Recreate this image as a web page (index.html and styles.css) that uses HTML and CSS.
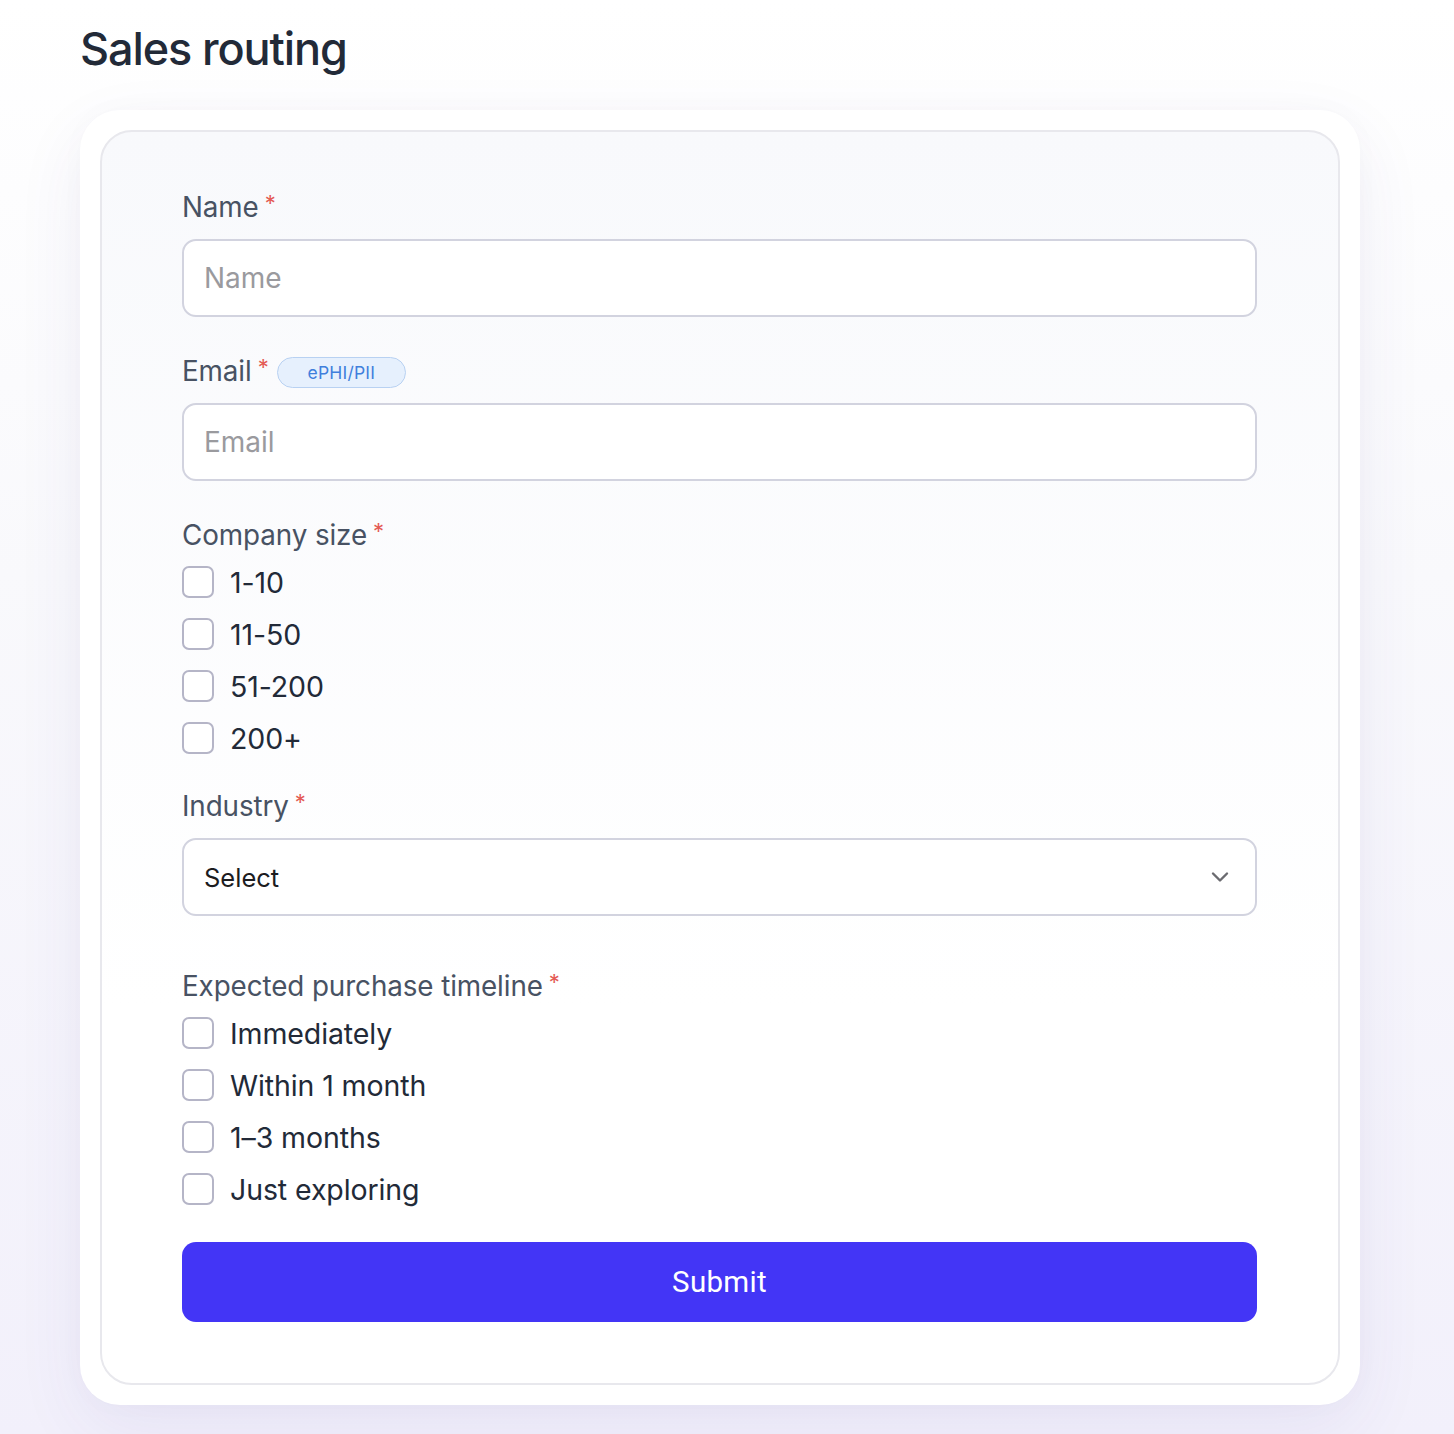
FILE: index.html
```html
<!DOCTYPE html>
<html lang="en">
<head>
<meta charset="utf-8">
<title>Sales routing</title>
<link rel="stylesheet" href="styles.css">
</head>
<body>
<main class="page">
  <h1 class="title">Sales routing</h1>
  <div class="outer">
    <form class="card">
      <div class="field">
        <label class="label">Name<span class="req">*</span></label>
        <div class="input"><span class="ph">Name</span></div>
      </div>
      <div class="field">
        <label class="label">Email<span class="req">*</span><span class="badge">ePHI/PII</span></label>
        <div class="input"><span class="ph">Email</span></div>
      </div>
      <div class="field">
        <label class="label">Company size<span class="req">*</span></label>
        <div class="options">
          <div class="opt"><span class="box"></span><span class="opt-text">1-10</span></div>
          <div class="opt"><span class="box"></span><span class="opt-text">11-50</span></div>
          <div class="opt"><span class="box"></span><span class="opt-text">51-200</span></div>
          <div class="opt"><span class="box"></span><span class="opt-text">200+</span></div>
        </div>
      </div>
      <div class="field field-select">
        <label class="label">Industry<span class="req">*</span></label>
        <div class="input select"><span class="val">Select</span>
          <svg class="chev" width="20" height="12" viewBox="0 0 20 12"><path d="M3 2.5 L10 9.5 L17 2.5" fill="none" stroke="#6b6b70" stroke-width="2.4" stroke-linecap="round" stroke-linejoin="round"/></svg>
        </div>
      </div>
      <div class="field">
        <label class="label">Expected purchase timeline<span class="req">*</span></label>
        <div class="options">
          <div class="opt"><span class="box"></span><span class="opt-text">Immediately</span></div>
          <div class="opt"><span class="box"></span><span class="opt-text">Within 1 month</span></div>
          <div class="opt"><span class="box"></span><span class="opt-text">1–3 months</span></div>
          <div class="opt"><span class="box"></span><span class="opt-text">Just exploring</span></div>
        </div>
      </div>
      <button type="button" class="submit">Submit</button>
    </form>
  </div>
</main>
</body>
</html>
```

FILE: styles.css
```css
html, body {
  margin: 0;
  padding: 0;
}
body {
  min-height: 1434px;
  background: linear-gradient(180deg, #ffffff 0%, #f9f9fc 40%, #f2f0fb 100%);
  font-family: Inter, "Noto Sans", sans-serif;
}
.page {
  padding: 22px 94px 29px 80px;
}
.title {
  margin: 0 0 34px 0;
  font-size: 45px;
  line-height: 54px;
  font-weight: 500;
  letter-spacing: -1.1px;
  color: #222a38;
}
.outer {
  background: #ffffff;
  border-radius: 40px;
  padding: 20px;
  box-shadow: 0 24px 70px rgba(70, 60, 150, 0.07), 0 0 30px rgba(0, 0, 0, 0.02);
}
.card {
  border: 2px solid #e8e8ed;
  border-radius: 32px;
  background: linear-gradient(180deg, #f8f9fc 0%, #ffffff 70%);
  padding: 57px 81px 61px 80px;
  display: flex;
  flex-direction: column;
}
.field {
  display: flex;
  flex-direction: column;
  margin-bottom: 36px;
}
.field-email {
  margin-bottom: 37px;
}
.field-select {
  margin-bottom: 52px;
}
.label {
  display: flex;
  align-items: center;
  height: 36px;
  font-size: 27.8px;
  color: #485263;
  letter-spacing: -0.1px;
}
.req {
  color: #e45a54;
  font-size: 22px;
  margin-left: 6px;
  align-self: flex-start;
  margin-top: 1px;
}
.badge {
  display: inline-flex;
  align-items: center;
  justify-content: center;
  margin-left: 8px;
  margin-top: 3px;
  height: 29px;
  padding: 0 30px;
  border: 1.5px solid #b8d1f2;
  background: #e6f0fd;
  border-radius: 17px;
  font-size: 17.5px;
  color: #3f7fdc;
  letter-spacing: 0.2px;
}
.input {
  margin-top: 14px;
  height: 74px;
  border: 2px solid #d2d3df;
  border-radius: 14px;
  background: #ffffff;
  display: flex;
  align-items: center;
  padding: 0 20px;
}
.ph {
  font-size: 28px;
  color: #9a9a9e;
}
.select {
  justify-content: space-between;
  padding-right: 25px;
}
.val {
  font-size: 25.5px;
  color: #1c1c1f;
}
.chev {
  display: block;
}
.options {
  display: flex;
  flex-direction: column;
  margin-top: 3px;
  margin-bottom: -12px;
}
.opt {
  display: flex;
  align-items: center;
  height: 52px;
}
.box {
  width: 28px;
  height: 28px;
  border: 2px solid #b5b5c7;
  border-radius: 7px;
  background: #ffffff;
  flex: none;
}
.opt-text {
  margin-left: 16px;
  font-size: 28.5px;
  color: #222a38;
  letter-spacing: -0.1px;
}
.submit {
  margin-top: 3px;
  height: 80px;
  border: none;
  border-radius: 14px;
  background: #4335f6;
  color: #ffffff;
  font-family: Roboto, Inter, sans-serif;
  font-size: 29.5px;
  font-weight: 400;
  letter-spacing: 0.3px;
  cursor: pointer;
}
```
